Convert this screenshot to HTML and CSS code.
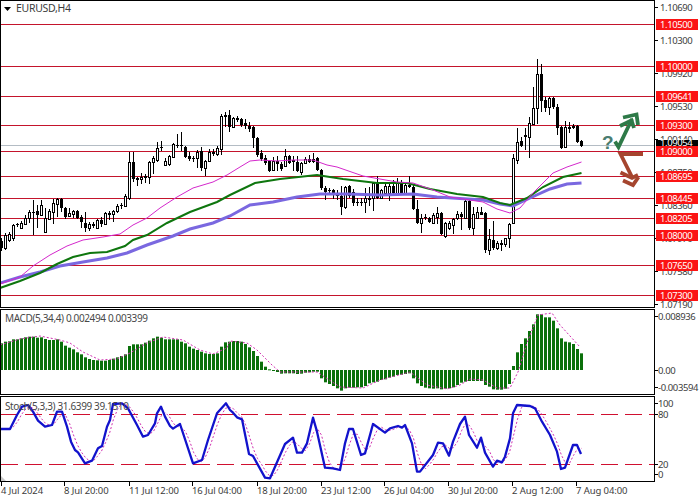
FILE: index.html
```html
<!DOCTYPE html>
<html lang="en">
<head>
<meta charset="utf-8">
<title>EURUSD,H4</title>
<link rel="stylesheet" href="styles.css">
</head>
<body>
<main class="chart">
  <section class="pane pane-main">
    <div class="plot">
      <svg id="plot-main" class="fill" viewBox="1 1 653 306">
        <g id="levels"></g>
        <g id="candles"></g>
        <g id="averages"></g>
        <polygon class="ink" points="4,7 11,7 7.5,11"/>
        <text class="title" x="16" y="12">EURUSD,H4</text>
        <text class="query" x="602" y="149">?</text>
        <g class="arrow-up">
          <path d="M615 141.5 618.5 147 632 119"/>
          <path d="M623 117.5 636.5 114.5 638 125"/>
          <path d="M620 126 631.5 120.5 634 128"/>
        </g>
        <g class="arrow-down">
          <path d="M643 154H620.5L632 177"/>
          <path d="M620.5 172.5 632 178 638 175"/>
          <path d="M623 180.5 633 185 638.5 177"/>
        </g>
      </svg>
    </div>
    <svg id="axis-main" class="axis" viewBox="655 0 45 308"></svg>
  </section>
  <section class="pane pane-macd">
    <div class="plot">
      <svg id="plot-macd" class="fill" viewBox="1 310 653 84">
        <g id="macd"></g>
        <text class="legend" x="5" y="322">MACD(5,34,4) 0.002494 0.003399</text>
      </svg>
    </div>
    <svg class="axis" viewBox="655 309 45 86">
      <path class="tick" d="M655 316.5H658M655 370.5H658M655 387.5H658"/>
      <text class="scale" x="658" y="320">0.008936</text>
      <text class="scale" x="658" y="374">0.00</text>
      <text class="scale" x="658" y="391">-0.003594</text>
    </svg>
  </section>
  <section class="pane pane-stoch">
    <div class="plot">
      <svg id="plot-stoch" class="fill" viewBox="1 397 653 84">
        <path class="stoch-level" d="M1 414.5H654M1 464.5H654"/>
        <g id="stoch"></g>
        <text class="legend" x="5" y="410">Stoch(5,3,3) 31.6399 39.1510</text>
        <polygon class="corner" points="1,476 1,481 6,481"/>
      </svg>
    </div>
    <svg class="axis" viewBox="655 396 45 86">
      <path class="tick" d="M655 403.5H658M655 414.5H658M655 464.5H658M655 474.5H658"/>
      <text class="scale" x="658" y="407">100</text>
      <text class="scale" x="658" y="418">80</text>
      <text class="scale" x="658" y="468">20</text>
      <text class="scale" x="658" y="478">0</text>
    </svg>
  </section>
  <svg id="time-axis" class="time-axis" viewBox="0 482 700 18"></svg>
</main>
<script src="chart.js"></script>
</body>
</html>
```
FILE: styles.css
```css
html, body {
  margin: 0;
  padding: 0;
  background: #fff;
}
.chart {
  width: 700px;
  height: 500px;
  display: flex;
  flex-direction: column;
  gap: 1px;
  overflow: hidden;
}
.pane {
  display: flex;
}
.pane-main { height: 308px; }
.pane-macd { height: 86px; }
.pane-stoch { height: 86px; }
.plot {
  box-sizing: border-box;
  width: 655px;
  height: 100%;
  border: 1px solid #000;
  flex: none;
}
.fill, .axis, .time-axis { display: block; }
.fill { width: 653px; height: 100%; }
.axis { width: 45px; height: 100%; flex: none; overflow: visible; }
.time-axis { width: 700px; height: 18px; margin-top: -1px; }
text {
  font-family: "Noto Sans", "Liberation Sans", sans-serif;
  font-size: 9.5px;
  letter-spacing: -0.4px;
  fill: #3c3c3c;
}
.time-label { letter-spacing: -0.1px; }
.title { font-size: 10.5px; letter-spacing: -0.3px; }
.legend { fill: #484848; font-size: 10px; letter-spacing: -0.37px; }
.ink { fill: #000; }
.tick { stroke: #000; fill: none; }
.level-line { stroke: #c4142c; fill: none; }
.bid-line { stroke: #b4bcc4; fill: none; }
.wick { stroke: #000; fill: none; shape-rendering: crispEdges; }
.bear { fill: #000; shape-rendering: crispEdges; }
.bull { fill: #fff; stroke: #000; shape-rendering: crispEdges; }
.ma-fast { stroke: #d428cc; stroke-width: 1; fill: none; }
.ma-mid { stroke: #0e760e; stroke-width: 2; fill: none; }
.ma-slow { stroke: #7a68e0; stroke-width: 3; fill: none; }
.hist { fill: #0a700a; }
.signal { stroke: #d030b0; stroke-width: 1; stroke-dasharray: 2 2; fill: none; }
.stoch-main { stroke: #1212cc; stroke-width: 2.3; fill: none; stroke-linejoin: round; }
.stoch-level { stroke: #d01030; stroke-dasharray: 17 7; fill: none; }
.corner { fill: #c8c8c8; }
.query { font-family: "Liberation Sans", sans-serif; font-size: 19px; font-weight: 700; letter-spacing: 0; fill: #4a7d70; }
.arrow-up path { stroke: #2e7a48; stroke-width: 3.8; fill: none; }
.arrow-down path { stroke: #a5452e; stroke-width: 3.8; fill: none; }
.tag-level { fill: #fb1414; }
.tag-bid { fill: #000; }
.tag-text { fill: #fff; }
```
FILE: chart.js
```js
var NS = 'http://www.w3.org/2000/svg';
function el(parent, name, cls, attrs, text) {
  var n = document.createElementNS(NS, name);
  if (cls) n.setAttribute('class', cls);
  for (var k in attrs) n.setAttribute(k, attrs[k]);
  if (text) n.textContent = text;
  parent.appendChild(n);
  return n;
}
function byId(id) { return document.getElementById(id); }
function line(pts) { return 'M' + pts.map(function (p) { return p.join(' '); }).join('L'); }
function xOf(k) { return 1.5 + 4 * k; }

/* [high, body top, body bottom, low, 1 = bearish] */
var candles = [
[238,241,248,251,1],[233,235,248,250,0],[232,234,240,242,0],[224,225,238,241,0],[223,224,225,227,1],[221,223,228,229,0],
[215,218,224,225,0],[210,212,218,223,0],[200,212,213,235,1],[205,211,215,228,1],[200,205,215,216,0],[208,218,232,233,0],
[209,211,219,220,0],[199,203,212,224,0],[198,199,204,217,0],[198,199,208,212,1],[207,208,217,219,1],[208,213,216,217,0],
[210,211,214,218,0],[210,211,218,219,1],[215,217,222,228,1],[212,223,228,232,1],[222,224,228,231,0],[222,224,225,228,0],
[219,220,228,229,0],[217,220,224,227,1],[212,213,224,225,0],[211,213,214,220,0],[210,211,214,222,0],[204,206,211,213,0],
[203,205,206,209,1],[194,196,206,207,0],[152,162,198,200,0],[152,162,179,182,1],[177,178,180,186,1],[173,177,179,184,0],
[174,176,177,183,0],[161,162,177,184,0],[156,158,162,174,0],[142,148,160,162,0],[141,147,148,151,1],[158,161,165,166,0],
[155,156,164,166,0],[143,144,157,158,0],[134,145,146,148,1],[132,145,146,151,1],[146,147,157,158,1],[152,156,159,161,1],
[156,158,159,162,1],[150,152,158,168,0],[147,151,168,171,1],[160,161,168,176,0],[149,152,161,162,0],[149,152,154,156,1],
[146,148,154,156,0],[114,116,149,155,0],[112,115,116,127,0],[110,115,127,132,1],[117,118,127,128,0],[116,118,120,122,1],
[118,119,125,127,1],[119,123,126,129,1],[122,126,129,132,1],[126,127,138,148,1],[137,138,155,157,1],[150,153,159,161,1],
[155,158,163,165,1],[160,161,171,172,1],[157,161,170,171,0],[156,161,164,171,1],[162,164,169,171,1],[149,156,166,167,0],
[155,156,163,164,1],[156,160,162,171,1],[156,162,171,172,1],[162,163,172,175,0],[157,159,163,164,0],[155,159,162,163,1],
[153,159,162,163,1],[157,158,170,171,1],[169,170,188,190,1],[186,188,192,200,1],[188,190,191,195,1],[189,190,194,199,1],
[190,195,196,200,1],[186,196,207,215,1],[186,187,207,209,0],[185,186,196,198,1],[189,192,203,206,1],[198,202,203,206,1],
[198,202,203,206,1],[188,198,202,213,0],[187,198,199,206,0],[183,183,198,211,0],[176,183,198,199,1],[189,190,198,199,0],
[182,186,193,194,0],[183,186,193,201,0],[180,186,193,194,1],[178,183,193,195,0],[180,183,193,194,1],[182,185,193,194,0],
[176,185,187,188,1],[185,187,209,210,1],[200,209,223,224,1],[214,218,223,233,0],[214,217,218,220,1],[217,218,222,223,1],
[213,215,223,224,0],[207,213,217,224,0],[212,213,234,235,1],[222,223,236,238,0],[221,223,228,230,0],[218,219,225,234,0],
[211,214,218,220,0],[212,214,217,230,1],[200,201,218,219,0],[200,201,228,230,1],[207,214,228,235,0],[207,212,218,219,0],
[207,212,215,215,1],[212,213,250,253,1],[229,239,250,255,0],[221,240,248,250,1],[241,243,248,250,0],[240,243,244,251,0],
[238,238,244,247,0],[223,224,238,248,0],[154,158,223,224,0],[128,142,160,164,0],[137,141,146,147,1],[128,135,137,150,1],
[117,123,137,158,0],[87,108,124,125,0],[59,74,108,124,0],[64,74,101,112,1],[97,100,108,112,1],[97,98,107,115,0],
[97,98,107,109,1],[104,107,128,135,1],[126,127,148,149,1],[121,127,147,148,0],[122,127,129,133,1],[124,126,128,129,1],
[125,126,142,143,1],[140,141,146,147,1]
];

var maFast = [[0,284],[20,277],[33,266],[50,255],[67,246],[83,240],[103,237],[120,234],[133,225],[147,218],[160,208],[177,197],[193,188],[213,182],[227,175],[240,167],[250,161],[260,160],[277,161],[293,160],[313,160],[327,165],[337,167],[363,176],[397,182],[413,183],[433,190],[450,197],[483,202],[497,209],[510,213],[520,208],[533,193],[553,173],[567,167],[581.5,162]];
var maMid = [[0,288],[20,281],[40,273],[57,264],[73,257],[90,253],[107,252],[125,246],[133,240],[147,235],[167,223],[190,212],[217,202],[230,195],[255,183],[280,179],[317,175],[343,179],[377,183],[407,183],[430,189],[457,194],[483,197],[500,203],[510,205],[527,198],[543,187],[563,177],[581.5,173]];
var maSlow = [[0,283],[20,277],[40,272],[60,266],[83,262],[107,258],[127,253],[147,245],[173,236],[190,229],[213,223],[230,216],[250,205],[273,202],[297,197],[320,194],[347,194],[380,195],[413,194],[437,197],[483,200],[500,204],[513,206],[530,198],[550,189],[567,184],[581.5,183]];

var levels = [[24.5,'1.10500'],[66.5,'1.10000'],[96.5,'1.09641'],[125.5,'1.09300'],[151.5,'1.09000'],[176.5,'1.08695'],[198.5,'1.08445'],[218.5,'1.08205'],[235.5,'1.08000'],[265.5,'1.07650'],[295.5,'1.07300']];
var scale = [[7.5,'1.10690'],[40.5,'1.10300'],[73.5,'1.09920'],[106.5,'1.09530'],[139.5,'1.09140'],[172.5,'1.08750'],[205.5,'1.08360'],[238.5,'1.07970'],[271.5,'1.07580'],[304.5,'1.07190']];

/* histogram tops, read at 3x: y = 300 + v / 3, zero at 210 */
var hist = [130,125,124,118,118,115,112,110,110,113,112,117,120,120,118,125,137,143,148,157,163,172,177,180,181,182,182,180,176,172,168,163,138,133,133,133,128,122,115,110,113,118,118,118,118,125,130,140,146,150,155,160,162,162,160,140,127,125,123,123,125,132,142,153,168,185,200,208,210,216,221,220,220,220,222,221,218,217,215,215,235,247,252,258,265,272,265,263,263,262,262,258,250,247,245,240,238,233,230,225,224,222,220,235,250,258,263,265,266,265,268,266,265,262,255,248,245,243,243,243,243,255,260,268,269,269,266,252,198,157,132,115,93,73,43,43,52,52,62,85,115,125,127,132,147,160];
var signal = [[0,345],[20,339],[40,336],[60,340],[70,343],[83,352],[100,360],[117,359],[130,353],[147,343],[163,337],[183,340],[200,350],[213,354],[227,348],[230,341],[247,343],[257,350],[272,365],[280,372],[317,372],[340,387],[363,388],[380,380],[410,372],[427,385],[447,389],[460,385],[470,379],[483,380],[497,388],[510,388],[518,372],[527,343],[538,315],[552,313],[560,325],[580,347]];

var stochPts = [
[0,387],[10,387],[17,345],[22,320],[28,315],[33,335],[38,362],[45,380],[52,375],[57,335],[62,335],[67,380],[71,425],[75,450],[78,457],[85,490],[92,482],[98,445],[102,438],[107,380],[110,360],[113,312],[122,310],[128,325],[137,375],[143,410],[148,405],[155,370],[157,340],[161,320],[165,350],[170,378],[173,386],[180,372],[193,490],[202,480],[208,420],[217,340],[226,310],[230,330],[233,338],[237,352],[242,358],[249,462],[253,468],[265,533],[270,535],[285,432],[293,413],[297,458],[302,458],[307,430],[313,353],[317,395],[325,503],[333,505],[340,510],[345,430],[349,387],[353,387],[361,465],[365,460],[373,372],[385,398],[390,385],[398,378],[402,383],[405,375],[412,430],[417,515],[420,515],[433,465],[438,428],[443,430],[449,467],[453,425],[460,372],[465,350],[469,405],[477,443],[481,413],[485,458],[493,500],[497,482],[502,487],[505,470],[510,415],[513,340],[517,315],[530,318],[535,325],[542,365],[550,405],[557,455],[561,507],[565,503],[573,435],[577,435],[581,462]
].map(function (p) { return [p[0], 300 + p[1] / 3]; });

/* price pane */
var lv = byId('levels');
levels.forEach(function (l) { el(lv, 'path', 'level-line', { d: 'M1 ' + l[0] + 'H654' }); });
el(lv, 'path', 'bid-line', { d: 'M1 145.5H654' });

var cg = byId('candles'), wicks = '';
candles.forEach(function (c, k) { wicks += 'M' + xOf(k) + ' ' + c[0] + 'V' + c[3]; });
el(cg, 'path', 'wick', { d: wicks });
candles.forEach(function (c, k) {
  var x = 4 * k, h = Math.max(c[2] - c[1], 1);
  if (c[4]) el(cg, 'rect', 'bear', { x: x, y: c[1], width: 3, height: h });
  else el(cg, 'rect', 'bull', { x: x + 0.5, y: c[1] + 0.5, width: 2, height: h });
});
var ag = byId('averages');
el(ag, 'path', 'ma-slow', { d: line(maSlow) });
el(ag, 'path', 'ma-mid', { d: line(maMid) });
el(ag, 'path', 'ma-fast', { d: line(maFast) });

/* price axis */
var ax = byId('axis-main');
scale.forEach(function (s) {
  el(ax, 'path', 'tick', { d: 'M655 ' + s[0] + 'H658' });
  el(ax, 'text', 'scale', { x: 660, y: s[0] + 3.5 }, s[1]);
});
el(ax, 'rect', 'tag-bid', { x: 656, y: 140, width: 42, height: 6 });
el(ax, 'text', 'tag-text', { x: 660, y: 146 }, '1.09054');
levels.forEach(function (l) {
  el(ax, 'rect', 'tag-level', { x: 656, y: l[0] - 5.5, width: 42, height: 11 });
  el(ax, 'text', 'tag-text', { x: 660, y: l[0] + 3.5 }, l[1]);
});

/* MACD */
var mg = byId('macd');
hist.forEach(function (v, k) {
  var y = 300 + v / 3, z = 370;
  el(mg, 'rect', 'hist', { x: 4 * k, y: Math.min(y, z), width: 3, height: Math.max(Math.abs(y - z), 1) });
});
el(mg, 'path', 'signal', { d: line(signal) });

/* Stochastic: %D is the 3-bar average of %K */
function at(pts, x) {
  for (var i = 1; i < pts.length; i++) {
    if (x <= pts[i][0]) {
      var a = pts[i - 1], b = pts[i];
      return a[1] + (b[1] - a[1]) * (x - a[0]) / (b[0] - a[0]);
    }
  }
  return pts[pts.length - 1][1];
}
var sg = byId('stoch'), d = [];
for (var k = 0; k < 146; k++) {
  var y0 = at(stochPts, xOf(k)), y1 = at(stochPts, xOf(Math.max(k - 1, 0))), y2 = at(stochPts, xOf(Math.max(k - 2, 0)));
  d.push([xOf(k), (y0 + y1 + y2) / 3]);
}
el(sg, 'path', 'signal', { d: line(d) });
el(sg, 'path', 'stoch-main', { d: line(stochPts) });

/* time axis */
var ta = byId('time-axis');
[[1,'4 Jul 2024'],[64,'8 Jul 20:00'],[129,'11 Jul 12:00'],[192,'16 Jul 04:00'],[257,'18 Jul 20:00'],[321,'23 Jul 12:00'],[384,'26 Jul 04:00'],[448,'30 Jul 20:00'],[512,'2 Aug 12:00'],[576,'7 Aug 04:00']].forEach(function (t) {
  el(ta, 'path', 'tick', { d: 'M' + (t[0] + 0.5) + ' 482V486' });
  el(ta, 'text', 'time-label', { x: t[0], y: 494 }, t[1]);
});
```
